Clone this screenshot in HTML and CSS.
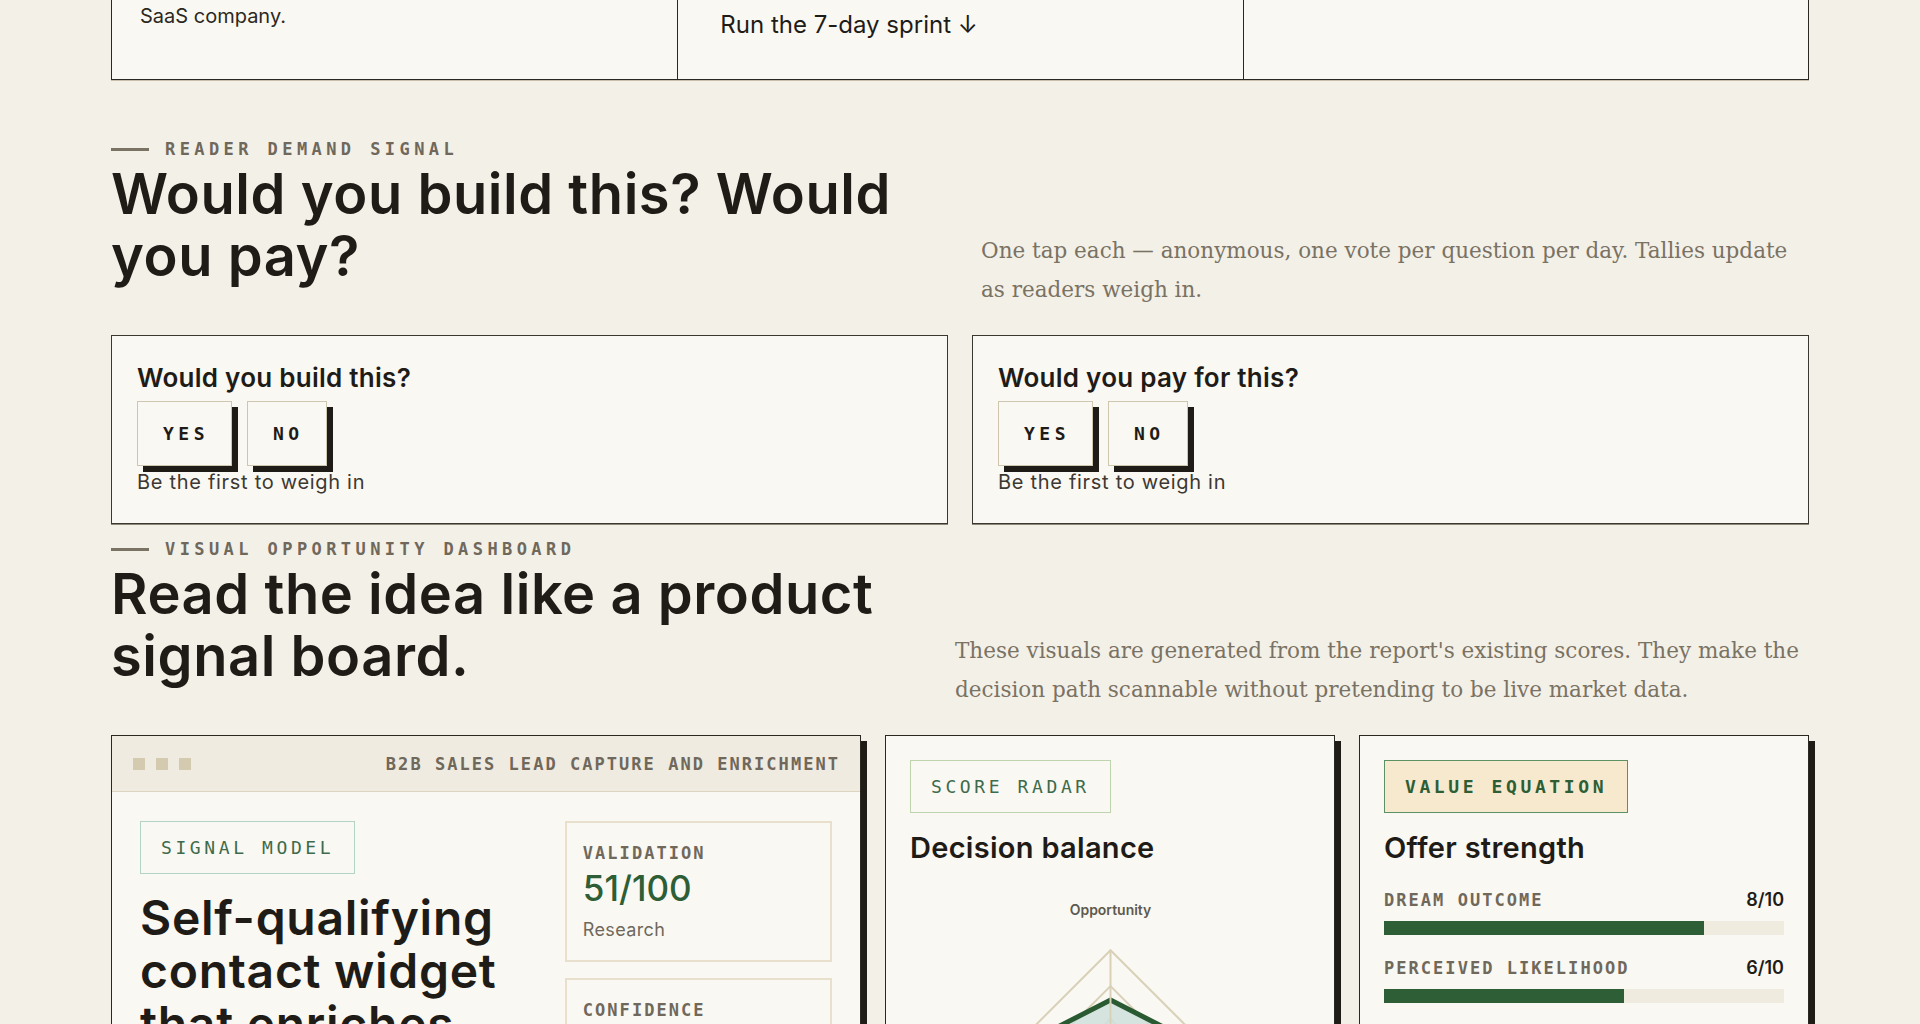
FILE: index.html
```html
<!DOCTYPE html>
<html>
<head>
    <title>Idea Report - Demand and Signals</title>
    <meta charset="UTF-8">
    <meta name="viewport" content="width=device-width, initial-scale=1.0">
    <link rel="stylesheet" href="styles.css">
</head>
<body>
    <main class="page">
        <div class="strip">
            <div class="strip-cell">
                <p>SaaS company.</p>
            </div>
            <div class="strip-cell">
                <a class="strip-link" href="#sprint">Run the 7-day sprint ↓</a>
            </div>
            <div class="strip-cell"></div>
        </div>

        <section class="demand">
            <div class="section-head">
                <div>
                    <p class="eyebrow">Reader demand signal</p>
                    <h2>Would you build this? Would you pay?</h2>
                </div>
                <p class="section-note">One tap each — anonymous, one vote per question per day. Tallies update as readers weigh in.</p>
            </div>

            <div class="vote-grid">
                <div class="vote-card">
                    <h3>Would you build this?</h3>
                    <div class="vote-buttons">
                        <button class="vote-btn">Yes</button>
                        <button class="vote-btn">No</button>
                    </div>
                    <p class="vote-tally">Be the first to weigh in</p>
                </div>
                <div class="vote-card">
                    <h3>Would you pay for this?</h3>
                    <div class="vote-buttons">
                        <button class="vote-btn">Yes</button>
                        <button class="vote-btn">No</button>
                    </div>
                    <p class="vote-tally">Be the first to weigh in</p>
                </div>
            </div>
        </section>

        <section class="dashboard">
            <div class="section-head section-head-wide">
                <div>
                    <p class="eyebrow">Visual opportunity dashboard</p>
                    <h2>Read the idea like a product signal board.</h2>
                </div>
                <p class="section-note">These visuals are generated from the report's existing scores. They make the decision path scannable without pretending to be live market data.</p>
            </div>

            <div class="board">
                <article class="panel panel-hero">
                    <div class="panel-bar">
                        <span class="dots"><i></i><i></i><i></i></span>
                        <span class="label">B2B sales lead capture and enrichment</span>
                    </div>
                    <div class="hero-body">
                        <div>
                            <span class="tag tag-mint">Signal model</span>
                            <h3 class="hero-title">Self-qualifying contact widget that enriches every lead before it reaches the CRM</h3>
                        </div>
                        <div class="stats">
                            <div class="stat">
                                <p class="label">Validation</p>
                                <p class="stat-value">51/100</p>
                                <p class="stat-note">Research</p>
                            </div>
                            <div class="stat">
                                <p class="label">Confidence</p>
                                <p class="stat-value">Medium</p>
                                <p class="stat-note">Signals</p>
                            </div>
                        </div>
                    </div>
                </article>

                <article class="panel">
                    <span class="tag tag-sage">Score radar</span>
                    <h3 class="panel-title">Decision balance</h3>
                    <svg class="radar" width="399" height="300" viewBox="0 0 400 300">
                        <text x="200" y="35" text-anchor="middle" class="radar-label">Opportunity</text>
                        <g fill="none" stroke="#d9d0b8" stroke-width="2">
                            <polygon points="200,70 300,170 200,270 100,170"/>
                            <polygon points="200,106 264,170 200,234 136,170"/>
                            <polygon points="200,139 231,170 200,201 169,170"/>
                        </g>
                        <polygon points="200,120 298,170 200,232 102,170" fill="#cfe0dc" fill-opacity="0.85" stroke="#2a5a32" stroke-width="5" stroke-linejoin="miter"/>
                        <g stroke="#d9d0b8" stroke-width="2">
                            <line x1="200" y1="70" x2="200" y2="270"/>
                            <line x1="100" y1="170" x2="300" y2="170"/>
                        </g>
                        <text x="200" y="295" text-anchor="middle" class="radar-label">Demand</text>
                    </svg>
                </article>

                <article class="panel">
                    <span class="tag tag-amber">Value equation</span>
                    <h3 class="panel-title">Offer strength</h3>
                    <div class="meters">
                        <div class="meter">
                            <div class="meter-head">
                                <span class="label">Dream outcome</span>
                                <span class="meter-score">8/10</span>
                            </div>
                            <div class="meter-track"><div class="meter-fill" style="width: 80%"></div></div>
                        </div>
                        <div class="meter">
                            <div class="meter-head">
                                <span class="label">Perceived likelihood</span>
                                <span class="meter-score">6/10</span>
                            </div>
                            <div class="meter-track"><div class="meter-fill" style="width: 60%"></div></div>
                        </div>
                        <div class="meter">
                            <div class="meter-head">
                                <span class="label">Time delay</span>
                                <span class="meter-score">5/10</span>
                            </div>
                            <div class="meter-track"><div class="meter-fill" style="width: 50%"></div></div>
                        </div>
                    </div>
                </article>
            </div>
        </section>
    </main>
</body>
</html>
```

FILE: styles.css
```css
* {
    box-sizing: border-box;
}
body {
    margin: 0;
    background: #f3f0e8;
    color: #1f1c17;
    font-family: Inter, "Noto Sans", sans-serif;
}
.page {
    max-width: 1698px;
    margin: 0 auto;
    padding-bottom: 80px;
}

/* top strip (scrolled past) */
.strip {
    display: grid;
    grid-template-columns: repeat(3, 1fr);
    min-height: 80px;
    background: #faf8f3;
    border: 1px solid #2b2822;
    border-top: none;
    box-shadow: 0 1px 0 #c8c0ad;
}
.strip-cell {
    padding: 3px 28px 0;
    border-left: 1px solid #2b2822;
}
.strip-cell:first-child {
    border-left: none;
}
.strip-cell p {
    margin: 0;
    font-size: 20px;
    line-height: 26px;
    color: #2b2822;
}
.strip-link {
    display: inline-block;
    padding: 7px 14px 0;
    font-size: 24px;
    line-height: 30px;
    color: #1f1c17;
    text-decoration: none;
}

/* section headings */
.demand {
    margin-top: 59px;
}
.dashboard {
    margin-top: 15px;
}
.section-head {
    display: grid;
    grid-template-columns: 1fr 828px;
    column-gap: 40px;
    align-items: end;
}
.section-head-wide {
    grid-template-columns: 1fr 854px;
}
.eyebrow {
    display: flex;
    align-items: center;
    gap: 16px;
    margin: 0;
    font-family: "DejaVu Sans Mono", monospace;
    font-weight: 700;
    font-size: 17px;
    line-height: 20px;
    letter-spacing: 0.26em;
    text-transform: uppercase;
    color: #6f685b;
}
.eyebrow::before {
    content: "";
    width: 38px;
    height: 3px;
    background: #7a7263;
}
h2 {
    max-width: 800px;
    margin: 4px 0 18px;
    font-size: 56px;
    line-height: 62px;
    font-weight: 600;
    letter-spacing: 0.01em;
    color: #1f1c17;
}
.section-note {
    margin: 0 0 -4px;
    font-family: "DejaVu Serif", serif;
    font-size: 21.5px;
    line-height: 39px;
    color: #7a7263;
}

/* voting */
.vote-grid {
    display: grid;
    grid-template-columns: 1fr 1fr;
    gap: 24px;
    margin-top: 30px;
}
.vote-card {
    padding: 27px 24px 28px 25px;
    background: #faf8f3;
    border: 1px solid #3b3731;
    box-shadow: 0 1px 0 #8d8778;
}
.vote-card h3 {
    margin: 0 0 8px;
    font-size: 26px;
    line-height: 30px;
    font-weight: 600;
    letter-spacing: 0.01em;
}
.vote-buttons {
    display: flex;
    gap: 15px;
}
.vote-btn {
    padding: 21px 22px 21px 25px;
    background: #faf8f3;
    border: 1px solid #cfc6b0;
    box-shadow: 6px 6px 0 #1f1c17;
    font-family: "DejaVu Sans Mono", monospace;
    font-weight: 700;
    font-size: 18px;
    line-height: 21px;
    letter-spacing: 0.25em;
    text-transform: uppercase;
    color: #1f1c17;
    cursor: pointer;
}
.vote-tally {
    margin: 3px 0 0;
    font-size: 20px;
    line-height: 26px;
    letter-spacing: 0.035em;
    color: #3d3932;
}

/* dashboard */
.board {
    display: grid;
    grid-template-columns: 5fr 3fr 3fr;
    gap: 24px;
    align-items: start;
    margin-top: 30px;
}
.panel {
    padding: 24px;
    background: #faf8f3;
    border: 1px solid #2b2822;
    box-shadow: 6px 6px 0 #1f1c17;
}
.panel-hero {
    padding: 0;
}
.panel-bar {
    display: flex;
    justify-content: space-between;
    align-items: center;
    height: 56px;
    padding: 0 20px 0 21px;
    background: #efebe0;
    border-bottom: 1px solid #ddd5c2;
}
.dots {
    display: flex;
    gap: 11px;
}
.dots i {
    width: 12px;
    height: 12px;
    background: #d3cab0;
}
.label {
    margin: 0;
    font-family: "DejaVu Sans Mono", monospace;
    font-weight: 700;
    font-size: 17px;
    line-height: 20px;
    letter-spacing: 0.12em;
    text-transform: uppercase;
    color: #6f685b;
}
.hero-body {
    display: grid;
    grid-template-columns: 1.5fr 1fr;
    gap: 24px;
    padding: 29px 28px 28px;
}
.tag {
    display: inline-block;
    padding: 14px 20px;
    border: 1px solid;
    font-family: "DejaVu Sans Mono", monospace;
    font-size: 18px;
    line-height: 23px;
    letter-spacing: 0.2em;
    text-transform: uppercase;
}
.tag-mint {
    border-color: #b3d3c6;
    color: #3e6b4b;
}
.tag-sage {
    border-color: #bdd4ae;
    color: #3e6b4b;
}
.tag-amber {
    background: #f7e9cd;
    border-color: #5c9065;
    color: #2d5e36;
    font-weight: 700;
}
.hero-title {
    margin: 17px 0 0;
    font-size: 48px;
    line-height: 53px;
    font-weight: 600;
    letter-spacing: 0.015em;
}
.stats {
    display: flex;
    flex-direction: column;
    gap: 16px;
}
.stat {
    padding: 20px 16px 18px;
    border: 2px solid #e8e0cd;
}
.stat-value {
    margin: 7px 0 0;
    font-size: 35px;
    line-height: 36px;
    font-weight: 500;
    color: #2d5e36;
}
.stat-note {
    margin: 12px 0 0;
    font-size: 18px;
    line-height: 24px;
    letter-spacing: 0.02em;
    color: #6f685b;
}
.panel-title {
    margin: 18px 0 0;
    font-size: 29px;
    line-height: 34px;
    font-weight: 600;
    letter-spacing: 0.01em;
}
.radar {
    display: block;
    margin: 15px auto 0;
}
.radar-label {
    font-family: Inter, sans-serif;
    font-size: 14px;
    font-weight: 600;
    fill: #5d5a4f;
}
.meters {
    display: flex;
    flex-direction: column;
    gap: 22px;
    margin-top: 24px;
}
.meter-head {
    display: flex;
    justify-content: space-between;
    align-items: baseline;
}
.meter-score {
    font-size: 18px;
    font-weight: 600;
    color: #1f1c17;
}
.meter-track {
    height: 14px;
    margin-top: 11px;
    background: #efebdf;
}
.meter-fill {
    height: 100%;
    background: #2d5e36;
}
```
